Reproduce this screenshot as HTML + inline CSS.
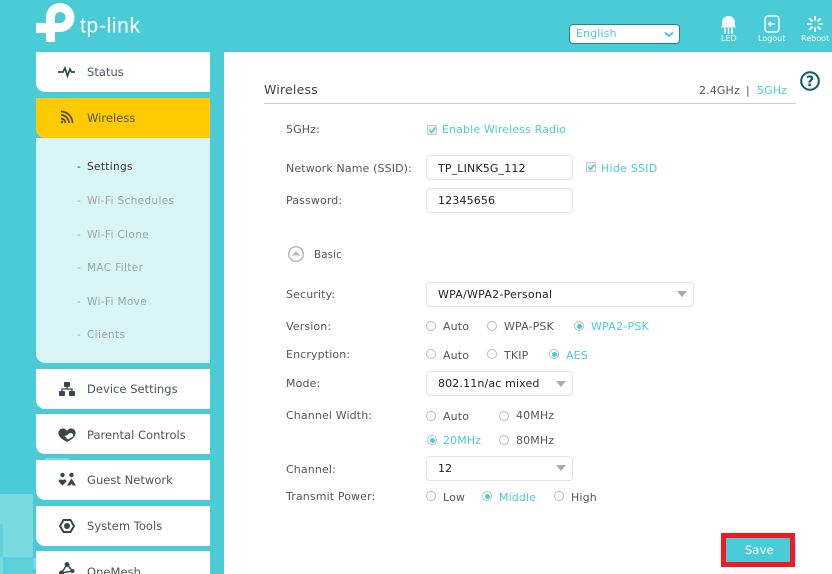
<!DOCTYPE html>
<html><head><meta charset="utf-8"><style>
html,body{margin:0;padding:0;width:832px;height:574px;overflow:hidden}
#w{position:relative;width:832px;height:574px;overflow:hidden;background:#4acbd6;font-family:"DejaVu Sans",sans-serif;font-size:11px;color:#555}
.t{position:absolute;white-space:nowrap;line-height:14px;letter-spacing:.13px}
.a{color:#4acbd6}
.b{position:absolute}
.nav{position:absolute;left:36px;width:174px;height:40px;background:#fff;border-bottom-left-radius:9px}
.n{position:absolute;left:87px;white-space:nowrap;line-height:14px;color:#4a5560;font-size:11.5px;letter-spacing:.03px}
.s{position:absolute;left:87px;white-space:nowrap;line-height:14px;color:#9ba5a8;font-size:10.5px;letter-spacing:.35px}
.d{position:absolute;left:77px;line-height:14px;color:#9ba5a8;font-size:10.5px}
.in{position:absolute;left:426px;width:145px;height:23px;border:1px solid #e4e4e4;border-radius:4px;background:#fff}
.v{position:absolute;left:438px;white-space:nowrap;line-height:14px;color:#222;letter-spacing:.15px;font-size:11px}
.r{position:absolute;width:8px;height:8px;border:1px solid #bbb;border-radius:50%;background:#fff}
.r.on:after{content:"";position:absolute;left:1.5px;top:1.5px;width:5px;height:5px;border-radius:50%;background:#4acbd6}
.tri{position:absolute;width:0;height:0;border-left:5px solid transparent;border-right:5px solid transparent;border-top:6px solid #aaa}
</style></head><body><div id="w">
<div class="b" style="left:0;top:494px;width:33px;height:63px;background:#79dae1"></div>
<div class="b" style="left:0;top:524px;width:3px;height:33px;background:#62d3dc"></div>
<div class="b" style="left:3px;top:557px;width:30px;height:17px;background:#5cd0da"></div>
<div class="b" style="left:0;top:557px;width:3px;height:17px;background:#79dae1"></div>
<div class="b" style="left:33px;top:558px;width:3px;height:11px;background:#79dae1"></div>
<div class="b" style="left:45px;top:458px;width:24px;height:2px;background:#79dae1"></div>

<svg class="b" style="left:36px;top:3px" width="110" height="40" viewBox="0 0 110 40">
<path fill-rule="evenodd" d="M0 20H10V14A14 14 0 0 1 24 0A14.500 14.500 0 0 1 24 29H19V39H10V30H0ZM19 20H24A5.500 5.500 0 0 0 24 9A5 5 0 0 0 19 14Z" fill="#fff"/>
<text x="44" y="29.500" font-family="'Liberation Sans',sans-serif" font-size="21" fill="#fff" textLength="60" lengthAdjust="spacing">tp-link</text>
</svg>

<div class="b" style="left:569px;top:24px;width:109px;height:18px;background:#fff;border:1px solid #1b8b96;border-radius:4px"></div>
<div class="t a" style="left:576px;top:27px">English</div>
<svg class="b" style="left:664px;top:31px" width="10" height="7"><path d="M1 1.500L5 5L9 1.500" fill="none" stroke="#4acbd6" stroke-width="2"/></svg>

<svg class="b" style="left:720px;top:15px" width="17" height="20" viewBox="0 0 17 20"><path d="M2 11V7.500A6.500 6.500 0 0 1 15 7.500V11L16 12.500H1Z" fill="#fff"/><path d="M5 13V19M8.500 13V19M12 13V19" stroke="#fff" stroke-width="1.500"/></svg>
<svg class="b" style="left:764px;top:15px" width="16" height="18" viewBox="0 0 16 18"><rect x="1" y="1" width="14" height="16" rx="3" fill="none" stroke="#fff" stroke-width="1.500"/><path d="M3.500 9L7 6V12Z" fill="#fff"/><path d="M7 9H11" stroke="#fff" stroke-width="1.500"/></svg>
<svg class="b" style="left:807px;top:16px" width="16" height="16" viewBox="0 0 16 16" stroke="#fff" stroke-width="1.800"><path d="M8 0V4.500M8 11.500V16M0 8H4.500M11.500 8H16M2.300 2.300L5.500 5.500M10.500 10.500L13.700 13.700M13.700 2.300L10.500 5.500M5.500 10.500L2.300 13.700"/></svg>
<div class="t" style="left:721px;top:32px;color:#fff;font-size:8px;letter-spacing:0">LED</div>
<div class="t" style="left:758px;top:32px;color:#fff;font-size:8px;letter-spacing:0">Logout</div>
<div class="t" style="left:801px;top:32px;color:#fff;font-size:8px;letter-spacing:0">Reboot</div>

<div class="b" style="left:224px;top:52px;width:608px;height:522px;background:#fff"></div>

<div class="nav" style="top:52px"></div>
<div class="nav" style="top:98px;background:#ffcb00"></div>
<div class="b" style="left:36px;top:138px;width:174px;height:225px;background:#daf5f7;border-bottom-left-radius:9px"></div>
<div class="nav" style="top:369px"></div>
<div class="nav" style="top:414px"></div>
<div class="nav" style="top:460px"></div>
<div class="nav" style="top:506px"></div>
<div class="nav" style="top:551px"></div>

<svg class="b" style="left:58px;top:65px" width="18" height="14" viewBox="0 0 18 14"><path d="M0 7H5L7 3L9.500 11L12 4L13.500 7H17" fill="none" stroke="#37474f" stroke-width="1.700"/></svg>
<svg class="b" style="left:60px;top:110px" width="14" height="14" viewBox="0 0 14 14" fill="none" stroke="#4a4a20" stroke-width="1.700"><path d="M1 1.500A11.500 11.500 0 0 1 12.500 13"/><path d="M1 5A8 8 0 0 1 9 13"/><path d="M1 8.500A4.500 4.500 0 0 1 5.500 13"/><circle cx="2" cy="12" r="1.200" fill="#4a4a20" stroke="none"/></svg>
<svg class="b" style="left:59px;top:381px" width="16" height="15" viewBox="0 0 16 15" fill="#37474f"><rect x="5" y="1" width="6" height="5" rx="1"/><rect x="0" y="10" width="6" height="5" rx="1"/><rect x="10" y="10" width="6" height="5" rx="1"/><path d="M8 6V8M3 10V8H13V10" fill="none" stroke="#37474f" stroke-width="1.300"/></svg>
<svg class="b" style="left:58px;top:428px" width="18" height="14" viewBox="0 0 18 14"><path d="M9 14Q1 10 .5 6A4.500 4.500 0 0 1 5 .5Q7.500.5 9 3Q10.500.5 13 .5A4.500 4.500 0 0 1 17.500 6Q17 10 9 14Z" fill="#37474f"/><path d="M10 11.500L15 8.500Q16 5.500 13 5Q11 5 9.500 7L6.500 8Z" fill="#fff"/></svg>
<svg class="b" style="left:58px;top:472px" width="18" height="15" viewBox="0 0 18 15" fill="#37474f"><circle cx="4.500" cy="3" r="2.200"/><circle cx="13.500" cy="3" r="2.200"/><path d="M4.500 13.500L.5 9.500Q.5 6.500 4.500 8Q8.500 6.500 8.500 9.500Z"/><path d="M13.500 6.500L18 13.500H15L13.500 12L12 13.500H9Z"/></svg>
<svg class="b" style="left:59px;top:518px" width="16" height="16" viewBox="0 0 16 16"><path d="M4.500 2H11.500L15 8L11.500 14H4.500L1 8Z" fill="none" stroke="#37474f" stroke-width="2"/><circle cx="8" cy="8" r="3" fill="#37474f"/></svg>
<svg class="b" style="left:59px;top:562px" width="16" height="13" viewBox="0 0 16 13" fill="#37474f"><circle cx="8" cy="2.500" r="2.500"/><circle cx="2.500" cy="11" r="2.500"/><circle cx="13.500" cy="9" r="2"/><path d="M8 2.500L2.500 11L13.500 9Z" fill="none" stroke="#37474f" stroke-width="1.500"/></svg>

<div class="n" style="top:65px">Status</div>
<div class="n" style="top:111px;color:#555">Wireless</div>
<div class="n" style="top:382px">Device Settings</div>
<div class="n" style="top:428px">Parental Controls</div>
<div class="n" style="top:473px">Guest Network</div>
<div class="n" style="top:519px">System Tools</div>
<div class="n" style="top:565px">OneMesh</div>

<div class="d" style="top:160px;color:#333">-</div><div class="s" style="top:160px;color:#333">Settings</div>
<div class="d" style="top:194px">-</div><div class="s" style="top:194px">Wi-Fi Schedules</div>
<div class="d" style="top:228px">-</div><div class="s" style="top:228px">Wi-Fi Clone</div>
<div class="d" style="top:261px">-</div><div class="s" style="top:261px">MAC Filter</div>
<div class="d" style="top:295px">-</div><div class="s" style="top:295px">Wi-Fi Move</div>
<div class="d" style="top:328px">-</div><div class="s" style="top:328px">Clients</div>

<div class="t" style="left:264px;top:83px;font-size:12.500px;color:#444;letter-spacing:.2px">Wireless</div>
<div class="b" style="left:264px;top:103px;width:532px;height:1px;background:#ccc"></div>
<div class="t" style="left:699px;top:84px;color:#555">2.4GHz</div>
<div class="t" style="left:746px;top:84px;color:#555">|</div>
<div class="t a" style="left:757px;top:84px">5GHz</div>
<svg class="b" style="left:799px;top:70px" width="22" height="22" viewBox="0 0 22 22"><circle cx="11" cy="11" r="8.800" fill="none" stroke="#0d5a66" stroke-width="2"/><text x="11" y="16" text-anchor="middle" font-family="'DejaVu Sans',sans-serif" font-weight="bold" font-size="14" fill="#0d5a66">?</text></svg>

<div class="t" style="left:286px;top:123px">5GHz:</div>
<div class="b" style="left:427px;top:125px;width:8px;height:8px;border:1px solid #ccc;background:#eee"></div>
<svg class="b" style="left:428px;top:126px" width="9" height="9"><path d="M1.500 4L3.500 6.500L7.500 1.500" fill="none" stroke="#4acbd6" stroke-width="1.500"/></svg>
<div class="t a" style="left:442px;top:123px">Enable Wireless Radio</div>

<div class="t" style="left:286px;top:162px">Network Name (SSID):</div>
<div class="in" style="top:155px"></div>
<div class="v" style="top:162px">TP_LINK5G_112</div>
<div class="b" style="left:586px;top:162px;width:8px;height:8px;border:1px solid #ccc;background:#eee"></div>
<svg class="b" style="left:587px;top:163px" width="9" height="9"><path d="M1.500 4L3.500 6.500L7.500 1.500" fill="none" stroke="#4acbd6" stroke-width="1.500"/></svg>
<div class="t a" style="left:601px;top:162px;letter-spacing:.25px">Hide SSID</div>

<div class="t" style="left:286px;top:194px">Password:</div>
<div class="in" style="top:188px"></div>
<div class="v" style="top:194px">12345656</div>

<svg class="b" style="left:287px;top:245px" width="18" height="18" viewBox="0 0 18 18"><circle cx="9" cy="9" r="7.300" fill="none" stroke="#bbb" stroke-width="1.500"/><path d="M4.500 10.500L9 6L13.500 10.500Z" fill="#bbb"/></svg>
<div class="t" style="left:314px;top:248px;font-size:10.300px">Basic</div>

<div class="t" style="left:286px;top:288px">Security:</div>
<div class="in" style="top:282px;width:266px"></div>
<div class="v" style="top:288px;letter-spacing:.25px">WPA/WPA2-Personal</div>
<div class="tri" style="left:677px;top:291px"></div>

<div class="t" style="left:286px;top:320px">Version:</div>
<div class="r" style="left:426px;top:321px"></div><div class="t" style="left:443px;top:320px">Auto</div>
<div class="r" style="left:487px;top:321px"></div><div class="t" style="left:504px;top:320px">WPA-PSK</div>
<div class="r on" style="left:574px;top:321px"></div><div class="t a" style="left:591px;top:320px;letter-spacing:.25px">WPA2-PSK</div>

<div class="t" style="left:286px;top:348px">Encryption:</div>
<div class="r" style="left:426px;top:349px"></div><div class="t" style="left:443px;top:349px">Auto</div>
<div class="r" style="left:487px;top:349px"></div><div class="t" style="left:504px;top:349px">TKIP</div>
<div class="r on" style="left:549px;top:349px"></div><div class="t a" style="left:566px;top:349px">AES</div>

<div class="t" style="left:286px;top:377px">Mode:</div>
<div class="in" style="top:371px"></div>
<div class="v" style="top:377px">802.11n/ac mixed</div>
<div class="tri" style="left:556px;top:381px"></div>

<div class="t" style="left:286px;top:409px">Channel Width:</div>
<div class="r" style="left:426px;top:411px"></div><div class="t" style="left:443px;top:410px">Auto</div>
<div class="r" style="left:499px;top:411px"></div><div class="t" style="left:516px;top:409px">40MHz</div>
<div class="r on" style="left:427px;top:435px"></div><div class="t a" style="left:443px;top:434px">20MHz</div>
<div class="r" style="left:499px;top:435px"></div><div class="t" style="left:516px;top:434px">80MHz</div>

<div class="t" style="left:286px;top:463px">Channel:</div>
<div class="in" style="top:456px"></div>
<div class="v" style="top:462px">12</div>
<div class="tri" style="left:556px;top:465px"></div>

<div class="t" style="left:286px;top:490px">Transmit Power:</div>
<div class="r" style="left:426px;top:491px"></div><div class="t" style="left:443px;top:491px">Low</div>
<div class="r on" style="left:482px;top:491px"></div><div class="t a" style="left:499px;top:491px">Middle</div>
<div class="r" style="left:554px;top:491px"></div><div class="t" style="left:571px;top:491px">High</div>

<div class="b" style="left:721px;top:533px;width:64px;height:24px;background:#4acbd6;border:5px solid #ed1c24"></div>
<div class="b" style="left:795px;top:537px;width:1px;height:24px;background:#b8d8dc"></div>
<div class="t" style="left:745px;top:543px;color:#fff;font-size:11.500px">Save</div>
</div></body></html>
